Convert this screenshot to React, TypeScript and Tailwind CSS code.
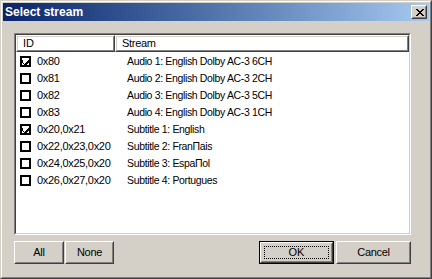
import React from "react";

const rows: { id: string; stream: string; checked: boolean }[] = [
  { id: "0x80", stream: "Audio 1: English Dolby AC-3 6CH", checked: true },
  { id: "0x81", stream: "Audio 2: English Dolby AC-3 2CH", checked: false },
  { id: "0x82", stream: "Audio 3: English Dolby AC-3 5CH", checked: false },
  { id: "0x83", stream: "Audio 4: English Dolby AC-3 1CH", checked: false },
  { id: "0x20,0x21", stream: "Subtitle 1: English", checked: true },
  { id: "0x22,0x23,0x20", stream: "Subtitle 2: Fran\u03A0ais", checked: false },
  { id: "0x24,0x25,0x20", stream: "Subtitle 3: Espa\u03A0ol", checked: false },
  { id: "0x26,0x27,0x20", stream: "Subtitle 4: Portugues", checked: false },
];

const xPixels = [
  "11....11",
  ".11..11.",
  "..1111..",
  "...11...",
  "..1111..",
  ".11..11.",
  "11....11",
];

function CloseGlyph() {
  const rects: React.ReactNode[] = [];
  xPixels.forEach((row, y) =>
    row.split("").forEach((c, x) => {
      if (c === "1") rects.push(<rect key={`${x}-${y}`} x={x} y={y} width={1} height={1} fill="#000" />);
    })
  );
  return (
    <svg width={8} height={7} viewBox="0 0 8 7" shapeRendering="crispEdges">
      {rects}
    </svg>
  );
}

function CheckBox({ checked }: { checked: boolean }) {
  return (
    <div className="w-[11px] h-[11px] border-2 border-black bg-white flex items-center justify-center shrink-0">
      {checked && (
        <svg width={7} height={7} viewBox="0 0 7 7" shapeRendering="crispEdges">
          <path d="M0 2h1v3h1v1h1v-1h1v-1h1v-1h1v-1h1v3h-1v1h-1v1h-1v1h-1v-1h-1v-1h-1v-1h-1z" fill="#000" />
        </svg>
      )}
    </div>
  );
}

function Raised({ className, children }: { className: string; children?: React.ReactNode }) {
  return (
    <div className={`border border-t-white border-l-white border-r-[#404040] border-b-[#404040] ${className}`}>
      <div className="w-full h-full border border-t-[#d4d0c8] border-l-[#d4d0c8] border-r-[#808080] border-b-[#808080] flex items-center">
        {children}
      </div>
    </div>
  );
}

function Btn({ label, w }: { label: string; w: string }) {
  return (
    <Raised className={`${w} h-[23px]`}>
      <span className="w-full text-center text-black tracking-[-0.3px]">{label}</span>
    </Raised>
  );
}

export default function App() {
  return (
    <div
      className="w-[432px] h-[279px] border border-t-[#d4d0c8] border-l-[#d4d0c8] border-r-[#404040] border-b-[#404040] text-[11px] leading-none"
      style={{ fontFamily: '"Liberation Sans", Arial, sans-serif' }}
    >
      <div className="w-full h-full border border-t-white border-l-white border-r-[#808080] border-b-[#808080] bg-[#d4d0c8] p-px flex flex-col">
        {/* title bar */}
        <div className="h-[18px] bg-gradient-to-r from-[#0a246a] to-[#a6caf0] flex items-center pl-[2px] pr-[2px] shrink-0">
          <span className="text-white font-bold text-[12px] flex-1">Select stream</span>
          <div className="w-[16px] h-[14px] border border-t-white border-l-white border-r-[#404040] border-b-[#404040]">
            <div className="w-full h-full border border-t-[#d4d0c8] border-l-[#d4d0c8] border-r-[#808080] border-b-[#808080] bg-[#d4d0c8] flex items-center justify-center pl-[1px]">
              <CloseGlyph />
            </div>
          </div>
        </div>

        {/* client */}
        <div className="flex-1 pl-[11px] pt-[12px] flex flex-col">
          <div className="w-[397px] h-[202px] border border-t-[#808080] border-l-[#808080] border-r-white border-b-white">
            <div className="w-full h-full border border-t-[#404040] border-l-[#404040] border-r-[#d4d0c8] border-b-[#d4d0c8] bg-white flex flex-col">
              <div className="flex h-[17px] shrink-0">
                <Raised className="w-[99px] h-full">
                  <span className="pl-[5px] text-black">ID</span>
                </Raised>
                <Raised className="flex-1 h-full">
                  <span className="pl-[5px] text-black tracking-[-0.3px]">Stream</span>
                </Raised>
              </div>
              <div className="pt-[1px] flex flex-col">
                {rows.map((r) => (
                  <div key={r.id} className="flex h-[17px] items-center text-black">
                    <div className="w-[111px] flex items-center pl-[4px] gap-[6px]">
                      <CheckBox checked={r.checked} />
                      <span className="tracking-[-0.3px]">{r.id}</span>
                    </div>
                    <span className="text-[10.5px] tracking-[-0.35px]">{r.stream}</span>
                  </div>
                ))}
              </div>
            </div>
          </div>

          <div className="flex mt-[6px] w-[397px]">
            <Btn label="All" w="w-[50px]" />
            <div className="ml-[1px]">
              <Btn label="None" w="w-[49px]" />
            </div>
            <div className="flex-1" />
            <div className="border border-black w-[75px] h-[23px]">
              <div className="w-full h-full border border-t-white border-l-white border-r-[#404040] border-b-[#404040]">
                <div className="w-full h-full border border-t-[#d4d0c8] border-l-[#d4d0c8] border-r-[#808080] border-b-[#808080] p-[2px]">
                  <div className="w-full h-full border border-dotted border-black flex items-center justify-center text-black">
                    OK
                  </div>
                </div>
              </div>
            </div>
            <div className="ml-[2px]">
              <Btn label="Cancel" w="w-[75px]" />
            </div>
          </div>
        </div>
      </div>
    </div>
  );
}
